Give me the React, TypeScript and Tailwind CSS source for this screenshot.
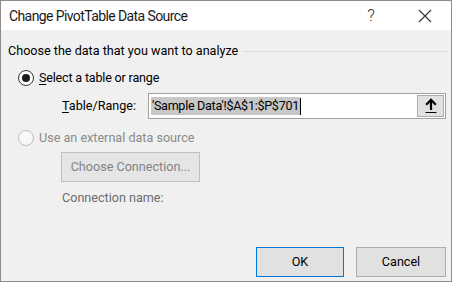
import React from 'react';

const font = { fontFamily: 'Roboto, "Noto Sans", sans-serif' };

const Radio: React.FC<{ checked?: boolean; disabled?: boolean }> = ({ checked, disabled }) => (
  <div
    className={
      'w-[16px] h-[16px] rounded-full border flex items-center justify-center ' +
      (disabled ? 'border-[#bcbcbc] bg-[#f7f7f7]' : 'border-[#333333] bg-white')
    }
  >
    {checked && <div className="w-[8px] h-[8px] rounded-full bg-[#1a1a1a]" />}
  </div>
);

const App: React.FC = () => {
  return (
    <div
      className="w-[452px] h-[282px] border border-[#8c8c8c] bg-[#f0f0f0] flex flex-col text-[12.6px] text-black overflow-hidden"
      style={font}
    >
      {/* title bar */}
      <div className="h-[29px] bg-white flex items-center pl-[8px] shrink-0">
        <span className="text-[14px] tracking-[-0.6px] text-[#1a1a1a] leading-none">Change PivotTable Data Source</span>
        <span className="ml-auto mr-[43px] text-[17px] font-light text-[#333] leading-none">?</span>
        <svg width="14" height="14" viewBox="0 0 14 14" className="mr-[19px]">
          <path d="M1 1 L13 13 M13 1 L1 13" stroke="#333" strokeWidth="1.1" />
        </svg>
      </div>

      {/* section header */}
      <div className="mt-[11px] h-[20px] flex items-center pl-[7px] pr-[4px]">
        <span className="leading-none whitespace-nowrap">Choose the data that you want to analyze</span>
        <div className="flex-1 ml-[5px] h-px bg-[#dcdcdc]" />
      </div>

      {/* option 1 */}
      <div className="mt-[9px] h-[16px] flex items-center pl-[17px]">
        <Radio checked />
        <span className="ml-[5px] leading-none tracking-[-0.2px]">
          <span className="underline underline-offset-2">S</span>elect a table or range
        </span>
      </div>

      <div className="mt-[7px] flex items-center pl-[61px] pr-[5px]">
        <span className="leading-none w-[86px]">
          <span className="underline underline-offset-2">T</span>able/Range:
        </span>
        <div className="flex-1 h-[26px] border border-[#a0a0a0] bg-white flex items-center pl-[2px] pr-[1px]">
          <span className="bg-[#c8c8c8] h-[18px] flex items-center px-[1px] leading-none whitespace-nowrap tracking-[-0.3px]">
            'Sample Data'!$A$1:$P$701
          </span>
          <div className="w-px h-[17px] bg-black" />
          <div className="ml-auto w-[27px] h-[22px] bg-[#e1e1e1] border border-[#adadad] flex items-center justify-center">
            <svg width="12" height="16" viewBox="0 0 12 16">
              <path d="M6 2 L6 12" stroke="#000" strokeWidth="2.2" />
              <path d="M1.2 6.8 L6 1.8 L10.8 6.8" stroke="#000" strokeWidth="2.2" fill="none" />
              <path d="M0.5 14.5 L11.5 14.5" stroke="#000" strokeWidth="1" />
            </svg>
          </div>
        </div>
      </div>

      {/* option 2 */}
      <div className="mt-[11px] h-[16px] flex items-center pl-[17px]">
        <Radio disabled />
        <span className="ml-[5px] leading-none text-[#8a8a8a]">Use an external data source</span>
      </div>

      <div className="mt-[6px] pl-[60px]">
        <div className="w-[139px] h-[30px] border border-[#bfbfbf] bg-[#e5e5e5] flex items-center justify-center text-[#838383] leading-none">
          Choose Connection...
        </div>
      </div>

      <div className="mt-[10px] pl-[61px] leading-none text-[#6d6d6d]">Connection name:</div>

      {/* buttons */}
      <div className="mt-auto mb-[4px] flex justify-end gap-[12px] pr-[5px]">
        <div className="w-[88px] h-[30px] border border-[#0078d7] bg-[#e1e1e1] flex items-center justify-center leading-none">
          OK
        </div>
        <div className="w-[90px] h-[30px] border border-[#adadad] bg-[#e1e1e1] flex items-center justify-center leading-none">
          Cancel
        </div>
      </div>
    </div>
  );
};

export default App;
